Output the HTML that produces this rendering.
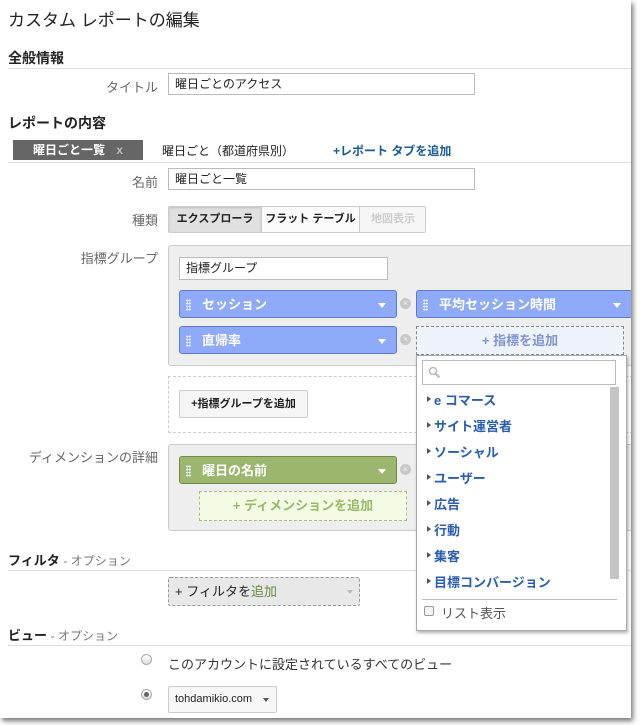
<!DOCTYPE html>
<html><head><meta charset="utf-8"><style>
*{margin:0;padding:0;box-sizing:border-box}
body{width:640px;height:725px;background:#fff;position:relative;overflow:hidden;font-family:"Liberation Sans","Noto Sans CJK JP",sans-serif;font-size:13px;color:#222}
.page{position:absolute;left:0;top:0;width:631px;height:718px;background:#fff;box-shadow:2px 3px 5px rgba(0,0,0,.55);overflow:hidden}
.a{position:absolute;white-space:nowrap}
.lbl{position:absolute;text-align:right;color:#666;font-size:13px;width:150px;left:8px}
.inp{position:absolute;border:1px solid #bbb;background:#fff;font-size:12px;padding:3px 6px;height:22px;line-height:15px}
.h{font-weight:bold;font-size:14px;color:#222}
.line{position:absolute;left:8px;right:0;height:1px;background:#ddd}
.chip{position:absolute;height:28px;border-radius:3px;color:#fff;font-weight:bold;font-size:13px;line-height:27px;padding-left:22px}
.blue{background:#8eaaf8;border:1px solid #5d79c9}
.green{background:#9cb66f;border:1px solid #6f8a45}
.dots{position:absolute;left:6px;top:8px;width:5px;height:12px;background:radial-gradient(circle,#e8eeff 1px,transparent 1.2px) 0 0/2.5px 3px}
.tri{position:absolute;right:10px;top:12px;border-left:4px solid transparent;border-right:4px solid transparent;border-top:5px solid #fff}
.xc{position:absolute;width:11px;height:11px;border-radius:50%;background:#c8c8c8;color:#eee;font-size:9px;line-height:11px;text-align:center}
.item{position:absolute;left:17px;color:#2a5db0;font-weight:bold;font-size:13px}
.item:before{content:"";position:absolute;left:-7px;top:6px;border-top:3.5px solid transparent;border-bottom:3.5px solid transparent;border-left:4px solid #555}
.radio{position:absolute;width:11px;height:11px;border-radius:50%;border:1px solid #aaa;background:linear-gradient(#fff,#ddd)}
</style></head><body>
<div class="page">
<div class="a" style="left:8px;top:6px;font-size:17px;color:#222">カスタム レポートの編集</div>
<div class="a h" style="left:8px;top:48px">全般情報</div>
<div class="line" style="top:68px"></div>
<div class="lbl" style="top:77px">タイトル</div>
<div class="inp" style="left:168px;top:73px;width:307px">曜日ごとのアクセス</div>
<div class="a h" style="left:8px;top:113px">レポートの内容</div>
<div class="a" style="left:13px;top:140px;width:130px;height:20px;background:#666;color:#fff;font-weight:bold;font-size:12px;line-height:20px;padding-left:20px">曜日ごと一覧 <span style="color:#bbb;margin-left:8px">x</span></div>
<div class="a" style="left:162px;top:142px;font-size:12px">曜日ごと（都道府県別）</div>
<div class="a" style="left:333px;top:142px;font-size:12px;color:#1a5b96;font-weight:bold">+レポート タブを追加</div>
<div class="line" style="top:162px"></div>
<div class="lbl" style="top:172px">名前</div>
<div class="inp" style="left:168px;top:168px;width:307px">曜日ごと一覧</div>
<div class="lbl" style="top:210px">種類</div>
<div class="a" style="left:168px;top:206px;width:258px;height:27px;border:1px solid #ccc;border-radius:2px;background:#f6f6f6;font-size:11px;font-weight:bold;line-height:25px">
<span style="position:absolute;left:0;top:0;width:92px;height:25px;background:#e0e0e0;text-align:center;box-shadow:inset 0 1px 2px rgba(0,0,0,.15)">エクスプローラ</span>
<span style="position:absolute;left:92px;top:0;width:99px;height:25px;border-left:1px solid #ccc;border-right:1px solid #ccc;text-align:center;background:#fafafa">フラット テーブル</span>
<span style="position:absolute;left:191px;top:0;width:66px;text-align:center;color:#ccc">地図表示</span></div>

<div class="lbl" style="top:248px">指標グループ</div>
<div class="a" style="left:168px;top:245px;width:480px;height:121px;background:#eee;border:1px solid #ccc;border-radius:3px"></div>
<div class="inp" style="left:179px;top:257px;width:209px;height:23px">指標グループ</div>
<div class="chip blue" style="left:179px;top:290px;width:218px"><i class="dots"></i>セッション<i class="tri"></i></div>
<div class="xc" style="left:400px;top:298px">×</div>
<div class="chip blue" style="left:416px;top:290px;width:230px"><i class="dots"></i>平均セッション時間<i class="tri" style="right:24px"></i></div>
<div class="chip blue" style="left:179px;top:326px;width:218px"><i class="dots"></i>直帰率<i class="tri"></i></div>
<div class="xc" style="left:400px;top:334px">×</div>
<div class="a" style="left:416px;top:326px;width:208px;height:29px;border:1px dashed #888;background:#eef2fb;color:#7f95cf;font-weight:bold;text-align:center;line-height:27px">+ 指標を追加</div>

<div class="a" style="left:168px;top:376px;width:480px;height:57px;border:1px dashed #ccc"></div>
<div class="a" style="left:179px;top:390px;width:129px;height:28px;border:1px solid #ccc;border-radius:2px;background:#f5f5f5;font-size:11px;font-weight:bold;text-align:center;line-height:26px">+指標グループを追加</div>

<div class="lbl" style="top:447px">ディメンションの詳細</div>
<div class="a" style="left:168px;top:444px;width:480px;height:87px;background:#eee;border:1px solid #ccc;border-radius:3px"></div>
<div class="chip green" style="left:179px;top:456px;width:218px"><i class="dots"></i>曜日の名前<i class="tri"></i></div>
<div class="xc" style="left:400px;top:464px">×</div>
<div class="a" style="left:199px;top:491px;width:208px;height:30px;border:1px dashed #a9c07c;background:#f3fbe4;color:#9ab86b;font-weight:bold;text-align:center;line-height:28px">+ ディメンションを追加</div>

<div class="a" style="left:8px;top:550px;font-size:13px"><b>フィルタ</b> <span style="font-size:12px;color:#777">- オプション</span></div>
<div class="line" style="top:570px"></div>
<div class="a" style="left:168px;top:577px;width:192px;height:29px;border:1px dashed #999;border-radius:2px;background:#e8e8e8;line-height:27px;padding-left:6px;font-size:13px">+ フィルタを<span style="color:#6a8d3c">追加</span><span style="position:absolute;right:6px;top:12px;border-left:3px solid transparent;border-right:3px solid transparent;border-top:4px solid #bbb"></span></div>

<div class="a" style="left:8px;top:625px;font-size:13px"><b>ビュー</b> <span style="font-size:12px;color:#777">- オプション</span></div>
<div class="line" style="top:645px"></div>
<div class="radio" style="left:141px;top:654px"></div>
<div class="a" style="left:168px;top:654px;font-size:13px;color:#333">このアカウントに設定されているすべてのビュー</div>
<div class="radio" style="left:141px;top:689px"><span style="position:absolute;left:2px;top:2px;width:5px;height:5px;border-radius:50%;background:#666"></span></div>
<div class="a" style="left:168px;top:686px;width:109px;height:27px;border:1px solid #ccc;border-radius:2px;background:#f7f7f7;font-size:11px;line-height:25px;padding-left:6px">tohdamikio.com<span style="position:absolute;right:7px;top:11px;border-left:3.5px solid transparent;border-right:3.5px solid transparent;border-top:4px solid #555"></span></div>

<div class="a" style="left:416px;top:355px;width:211px;height:276px;background:#fff;border:1px solid #aaa;box-shadow:1px 2px 3px rgba(0,0,0,.3)">
<div class="a" style="left:5px;top:4px;width:194px;height:25px;border:1px solid #bbb"><svg width="14" height="14" style="position:absolute;left:5px;top:5px"><circle cx="5" cy="5" r="3.5" fill="none" stroke="#bbb" stroke-width="1.6"/><path d="M7.5 7.5L11.5 11.5" stroke="#bbb" stroke-width="2.2"/></svg></div>
<div class="a" style="left:193px;top:31px;width:9px;height:192px;background:#c4c4c4"></div>
<div class="item" style="top:34px">e コマース</div>
<div class="item" style="top:60px">サイト運営者</div>
<div class="item" style="top:86px">ソーシャル</div>
<div class="item" style="top:112px">ユーザー</div>
<div class="item" style="top:138px">広告</div>
<div class="item" style="top:164px">行動</div>
<div class="item" style="top:190px">集客</div>
<div class="item" style="top:216px">目標コンバージョン</div>
<div class="a" style="left:5px;top:243px;width:195px;height:1px;background:#bbb"></div>
<div class="a" style="left:7px;top:250px;width:10px;height:10px;border:1px solid #999;border-radius:2px;background:#f4f4f4"></div>
<div class="a" style="left:24px;top:247px;font-size:13px;color:#555">リスト表示</div>
</div>
</div>
</body></html>
